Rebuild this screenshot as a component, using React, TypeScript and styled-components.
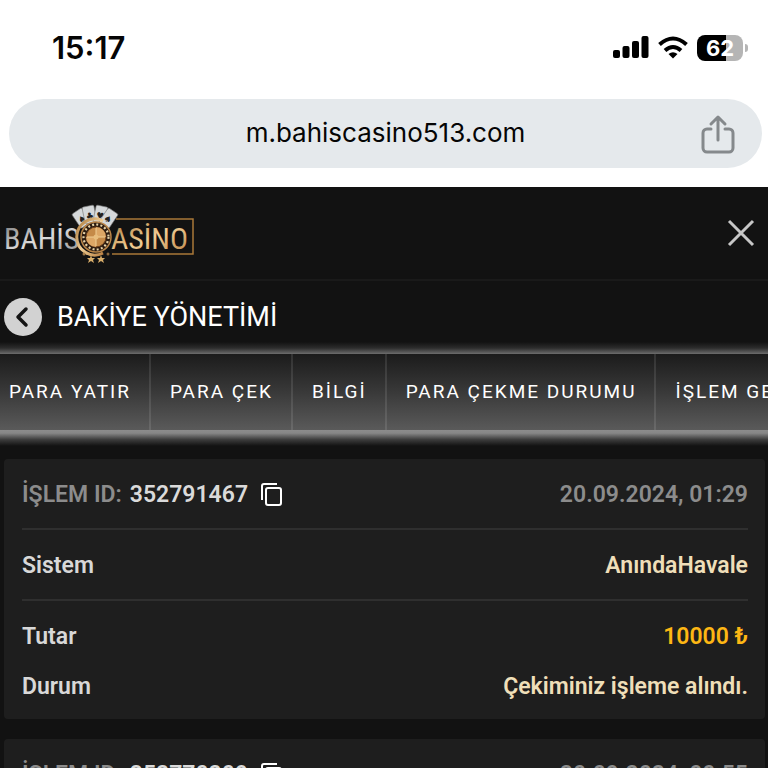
import React from "react";
import styled, { createGlobalStyle } from "styled-components";

const GlobalStyle = createGlobalStyle`
  * { box-sizing: border-box; }
  html, body { margin: 0; background: #121212; }
  button { border: 0; padding: 0; background: none; font: inherit; color: inherit; cursor: pointer; }
  svg { display: block; }
`;

const Page = styled.div`
  display: flex;
  flex-direction: column;
  height: 100vh;
  overflow: hidden;
  background: #121212;
  color: #fff;
  font-family: Roboto, "Liberation Sans", sans-serif;
`;

const BrowserChrome = styled.header`
  flex: none;
  background: #fff;
  color: #050505;
  font-family: Inter, "Liberation Sans", sans-serif;
  padding-bottom: 19px;
`;

const StatusBar = styled.div`
  display: flex;
  align-items: center;
  justify-content: space-between;
  height: 99px;
  padding: 0 20px 4px 52px;
`;

const Clock = styled.time`
  font-size: 31px;
  font-weight: 600;
`;

const StatusIcons = styled.div`
  display: flex;
  align-items: center;
  gap: 9px;
`;

const Battery = styled.div`
  display: flex;
  align-items: center;
  gap: 2px;
  &::after {
    content: "";
    width: 3px;
    height: 8px;
    border-radius: 0 4px 4px 0;
    background: #b5b5b5;
  }
`;

const BatteryBody = styled.span`
  width: 46px;
  height: 26px;
  border-radius: 8px;
  background: linear-gradient(90deg, #000 62%, #b5b5b5 62%);
  color: #fff;
  font-size: 22px;
  font-weight: 700;
  line-height: 26px;
  text-align: center;
`;

const AddressBar = styled.div`
  display: grid;
  grid-template-columns: 1fr auto 1fr;
  align-items: center;
  height: 69px;
  margin: 0 6px 0 9px;
  padding: 0 27px;
  border-radius: 35px;
  background: #e5e9ec;
`;

const Address = styled.span`
  grid-column: 2;
  font-size: 26px;
  line-height: 32px;
  padding-bottom: 2px;
`;

const ShareButton = styled.button`
  justify-self: end;
`;

const SiteHeader = styled.header`
  flex: none;
  display: flex;
  align-items: center;
  justify-content: space-between;
  height: 94px;
  padding: 0 13px 0 4px;
  border-bottom: 2px solid #1a1a1a;
`;

const TitleBar = styled.div`
  flex: none;
  display: flex;
  align-items: center;
  gap: 15px;
  height: 73px;
  padding: 0 4px 2px;
  background: linear-gradient(#12121200, #2c2c2c 50%, #6c6c6c) bottom / 100% 12px no-repeat;
`;

const BackButton = styled.button`
  width: 38px;
  height: 38px;
  border-radius: 50%;
  background: #d2d2d2;
`;

const Title = styled.h1`
  margin: 0;
  font-size: 27px;
  font-weight: 400;
  line-height: 32px;
`;

const Tabs = styled.nav`
  flex: none;
  display: flex;
  height: 76px;
  overflow: hidden;
  background: linear-gradient(#1b1b1b, #393939 50%, #5a5a5a);
`;

const Tab = styled.a<{ $first?: boolean }>`
  flex: none;
  display: flex;
  align-items: center;
  padding: 0 18px 2px ${(p) => (p.$first ? 9 : 19)}px;
  border-right: 2px solid rgba(255, 255, 255, 0.1);
  color: #fff;
  font-size: 19px;
  letter-spacing: 2px;
  text-decoration: none;
  white-space: nowrap;
`;

const Content = styled.main`
  flex: 1;
  min-height: 0;
  overflow: hidden;
  display: flex;
  flex-direction: column;
  gap: 20px;
  padding: 29px 3px 0 4px;
  background: linear-gradient(#8c8c8c, #868686 20%, #3c3c3c 60%, #12121200) top / 100% 16px no-repeat;
`;

const Card = styled.article`
  flex: none;
  padding: 0 17px 8px 18px;
  border-radius: 4px;
  background: #1e1e1e;
  font-size: 23px;
  font-weight: 600;
  line-height: 28px;
`;

const Row = styled.div<{ $divided?: boolean }>`
  display: flex;
  align-items: center;
  justify-content: space-between;
  height: ${(p) => (p.$divided ? 71 : 50)}px;
  padding-top: 2px;
  border-bottom: ${(p) => (p.$divided ? "2px solid #2f2f2f" : "0")};
`;

const Details = styled.div`
  padding-top: 10px;
`;

const Label = styled.span`
  color: #d8d8d8;
`;

const Muted = styled.span`
  color: #8c8c8c;
`;

const Identifier = styled.div`
  display: flex;
  align-items: center;
  gap: 8px;
`;

const Reference = styled.span`
  color: #dadada;
`;

const CopyButton = styled.button`
  margin-left: 5px;
`;

const Value = styled.span<{ $accent?: boolean }>`
  color: ${(p) => (p.$accent ? "#fdb714" : "#efdfb9")};
`;

const Logo = () => {
  const cards = [
    { x: 80, y: 216, r: -34, s: "♠" },
    { x: 89, y: 212, r: -12, s: "♣" },
    { x: 101, y: 212, r: 12, s: "♥" },
    { x: 110, y: 216, r: 34, s: "♠" },
  ];
  return (
    <svg width="192" height="66" viewBox="4 200 192 66" role="img" aria-label="Bahis Casino">
      <defs>
        <linearGradient id="silver" x1="0" y1="0" x2="1" y2="1">
          <stop offset="0" stopColor="#777" />
          <stop offset=".5" stopColor="#ddd" />
          <stop offset="1" stopColor="#8b8b8b" />
        </linearGradient>
        <linearGradient id="gold" x1="0" y1="0" x2="1" y2="1">
          <stop offset="0" stopColor="#a87538" />
          <stop offset=".5" stopColor="#f0cd94" />
          <stop offset="1" stopColor="#b98043" />
        </linearGradient>
      </defs>
      <path d="M116 219H193V254H112" fill="none" stroke="#a97838" strokeWidth="1.5" />
      <g fontFamily="'Roboto Condensed', Roboto, sans-serif" fontSize="30">
        <text x="4" y="249" fill="url(#silver)">BAHİS</text>
        <text x="111" y="249" fill="url(#gold)">ASİNO</text>
      </g>
      {cards.map((c) => (
        <g key={c.x} transform={`rotate(${c.r} ${c.x} ${c.y})`}>
          <rect x={c.x - 6} y={c.y - 6} width="12" height="17" rx="1.5" fill="#d5d8da" stroke="#777" strokeWidth=".6" />
          <text x={c.x} y={c.y + 7} fontSize="9" textAnchor="middle" fill="#222" fontFamily="DejaVu Sans">{c.s}</text>
        </g>
      ))}
      <path d="M103 221A18 18 0 1 0 103 253" fill="none" stroke="url(#gold)" strokeWidth="3" />
      <circle cx="96" cy="237" r="15" fill="#2b1b10" stroke="#b98448" strokeWidth="1.5" />
      <circle cx="96" cy="237" r="12.5" fill="none" stroke="#e6d2a8" strokeWidth="2.2" strokeDasharray="2 2.2" />
      <circle cx="96" cy="237" r="10" fill="#c58a48" stroke="#6c401d" />
      <path d="M96 227A10 10 0 0 1 106 237H96ZM96 237V247A10 10 0 0 1 86 237Z" fill="#dda766" />
      <path d="M87 237H105M96 228V246" stroke="#f0cf95" strokeWidth="1" />
      <circle cx="96" cy="237" r="2.5" fill="#e9be7d" />
      <circle cx="84" cy="254" r="1.5" fill="#a47b48" />
      <circle cx="108" cy="254" r="1.5" fill="#8a673d" />
      {[91, 101].map((x) => (
        <path key={x} transform={`translate(${x} 259)`} d="M0-4 1-1 4-1 2 1 3 4 0 2-3 4-2 1-4-1-1-1Z" fill="#d9ae6b" />
      ))}
    </svg>
  );
};

const CopyIcon = () => (
  <svg width="22" height="24" viewBox="0 0 22 24" fill="none" stroke="#fff" strokeWidth="2" aria-hidden="true">
    <path d="M1 17V3a2 2 0 0 1 2-2h13" />
    <rect x="5" y="5" width="15" height="17" rx="2" />
  </svg>
);

const tabs = ["PARA YATIR", "PARA ÇEK", "BİLGİ", "PARA ÇEKME DURUMU", "İŞLEM GEÇMİŞİ"];

const transactions = [
  { id: "352791467", date: "20.09.2024, 01:29" },
  { id: "352770209", date: "20.09.2024, 00:55" },
];

const Transaction = ({ id, date }: { id: string; date: string }) => (
  <Card>
    <Row $divided>
      <Identifier>
        <Muted>İŞLEM ID:</Muted>
        <Reference>{id}</Reference>
        <CopyButton aria-label="Kopyala"><CopyIcon /></CopyButton>
      </Identifier>
      <Muted>{date}</Muted>
    </Row>
    <Row $divided>
      <Label>Sistem</Label>
      <Value>AnındaHavale</Value>
    </Row>
    <Details>
      <Row>
        <Label>Tutar</Label>
        <Value $accent>10000 ₺</Value>
      </Row>
      <Row>
        <Label>Durum</Label>
        <Value>Çekiminiz işleme alındı.</Value>
      </Row>
    </Details>
  </Card>
);

export default function App() {
  return (
    <Page lang="tr">
      <GlobalStyle />
      <BrowserChrome>
        <StatusBar>
          <Clock>15:17</Clock>
          <StatusIcons>
            <svg width="36" height="23" viewBox="0 0 36 23" aria-label="Sinyal" role="img">
              <rect x="0" y="14" width="7" height="8" rx="2" />
              <rect x="9.5" y="10" width="7" height="12" rx="2" />
              <rect x="19" y="5" width="7" height="17" rx="2" />
              <rect x="28.5" y="0" width="7" height="22" rx="2" />
            </svg>
            <svg width="30" height="23" viewBox="0 0 30 23" fill="none" stroke="#000" strokeWidth="4" aria-label="Wi-Fi" role="img">
              <path d="M1.5 8.5Q15-3.5 28.5 8.5M7 14.5Q15 7.5 23 14.5" />
              <path d="M10.5 18Q15 14.5 19.5 18L15 22.5Z" fill="#000" stroke="none" />
            </svg>
            <Battery><BatteryBody>62</BatteryBody></Battery>
          </StatusIcons>
        </StatusBar>
        <AddressBar>
          <Address>m.bahiscasino513.com</Address>
          <ShareButton aria-label="Paylaş">
            <svg width="34" height="40" viewBox="0 0 34 40" fill="none" stroke="#85898c" strokeWidth="3" strokeLinecap="round" strokeLinejoin="round">
              <path d="M10 15H6a4 4 0 0 0-4 4v15a4 4 0 0 0 4 4h22a4 4 0 0 0 4-4V19a4 4 0 0 0-4-4h-4M17 26V4M10 10l7-7 7 7" />
            </svg>
          </ShareButton>
        </AddressBar>
      </BrowserChrome>
      <SiteHeader>
        <Logo />
        <button aria-label="Kapat">
          <svg width="28" height="28" viewBox="0 0 28 28" stroke="#c7c7c7" strokeWidth="3">
            <path d="M2 2 26 26M26 2 2 26" />
          </svg>
        </button>
      </SiteHeader>
      <TitleBar>
        <BackButton aria-label="Geri">
          <svg width="38" height="38" viewBox="0 0 38 38" fill="none" stroke="#151515" strokeWidth="3.5" strokeLinecap="round" strokeLinejoin="round">
            <path d="M22 11 14 19l8 8" />
          </svg>
        </BackButton>
        <Title>BAKİYE YÖNETİMİ</Title>
      </TitleBar>
      <Tabs>
        {tabs.map((tab, i) => (
          <Tab key={tab} href="#" $first={i === 0}>{tab}</Tab>
        ))}
      </Tabs>
      <Content>
        {transactions.map((t) => (
          <Transaction key={t.id} {...t} />
        ))}
      </Content>
    </Page>
  );
}
